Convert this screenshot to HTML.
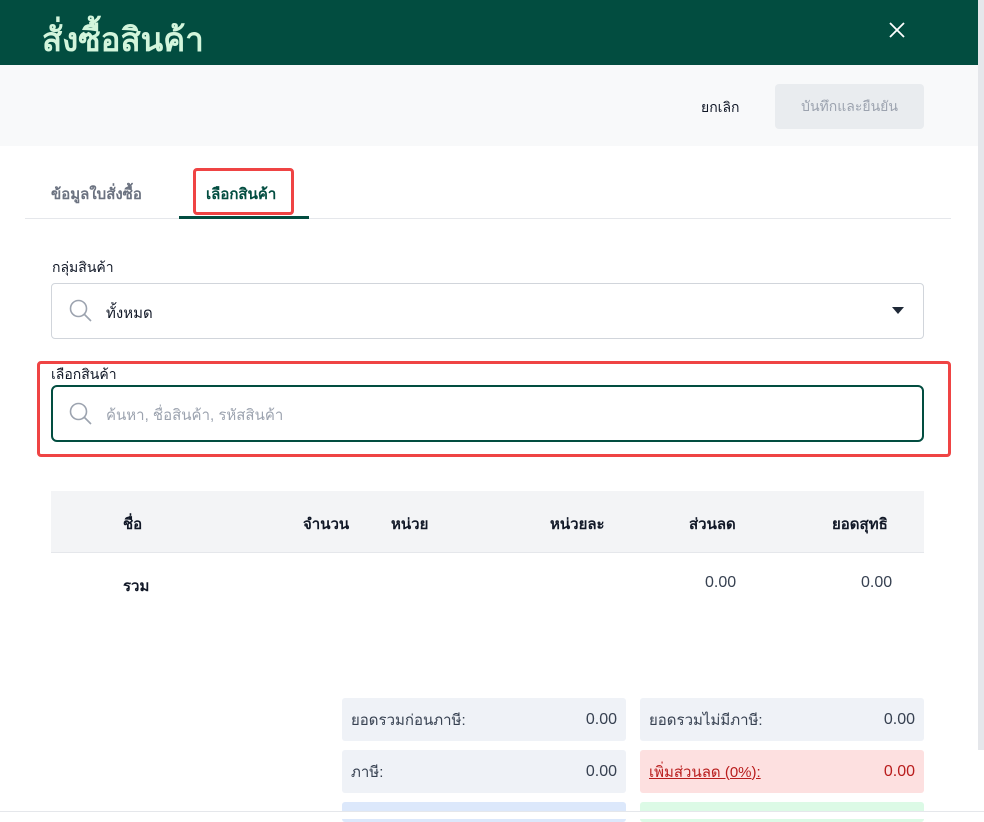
<!DOCTYPE html>
<html><head><meta charset="utf-8"><style>
*{box-sizing:border-box;margin:0;padding:0}
body{width:984px;height:819px;overflow:hidden;background:#fff;font-family:"Liberation Sans","DejaVu Sans",sans-serif;font-size:15px;color:#111827;position:relative}
.a{position:absolute}
.hdr{left:0;top:0;width:978px;height:65px;background:#024d40}
.title{left:42px;top:13px;font-size:33px;color:#d3f5dc;font-weight:bold}
.sb{left:978px;top:0;width:6px;height:750px;background:#e5e7eb}
.bar{left:0;top:65px;width:978px;height:81px;background:#f8f9fa}
.btn{left:775px;top:84px;width:149px;height:45px;background:#e9ecef;border-radius:4px;color:#9ca3af;font-size:14px;text-align:center;line-height:45px}
.box{border-radius:4px}
.row{display:flex;justify-content:space-between;align-items:center;padding:0 9px;height:43px;font-size:15px;border-radius:3px}
.n{font-size:16px}
</style></head><body>
<div class="a hdr"></div>
<div class="a title">สั่งซื้อสินค้า</div>
<svg class="a" style="left:888px;top:21px" width="18" height="18" viewBox="0 0 18 18"><path d="M2 2L16 16M16 2L2 16" stroke="#fff" stroke-width="1.8"/></svg>
<div class="a sb"></div>
<div class="a bar"></div>
<div class="a" style="left:701px;top:97px;font-size:14px">ยกเลิก</div>
<div class="a btn">บันทึกและยืนยัน</div>

<div class="a" style="left:25px;top:218px;width:926px;height:1px;background:#e5e7eb"></div>
<div class="a" style="left:51px;top:182px;color:#6b7280;font-weight:bold;font-size:15px">ข้อมูลใบสั่งซื้อ</div>
<div class="a" style="left:179px;top:216px;width:130px;height:3px;background:#024d40"></div>
<div class="a" style="left:193px;top:168px;width:101px;height:47px;border:3px solid #ef4444;border-radius:4px"></div>
<div class="a" style="left:206px;top:182px;color:#024d40;font-weight:bold;font-size:15px">เลือกสินค้า</div>

<div class="a" style="left:52px;top:257px;font-size:14px">กลุ่มสินค้า</div>
<div class="a box" style="left:51px;top:283px;width:873px;height:56px;border:1px solid #d1d5db"></div>
<svg class="a" style="left:68px;top:298px" width="26" height="26" viewBox="0 0 26 26"><circle cx="10.5" cy="10.5" r="8" fill="none" stroke="#9ca3af" stroke-width="1.6"/><path d="M16.5 16.5L23 23" stroke="#9ca3af" stroke-width="1.6"/></svg>
<div class="a" style="left:106px;top:301px;font-size:15px">ทั้งหมด</div>
<svg class="a" style="left:892px;top:307px" width="12" height="8"><path d="M0 0H12L6 7z" fill="#1f2937"/></svg>

<div class="a" style="left:37px;top:361px;width:914px;height:96px;border:3px solid #ef4444;border-radius:4px"></div>
<div class="a" style="left:51px;top:364px;font-size:14px">เลือกสินค้า</div>
<div class="a box" style="left:51px;top:385px;width:873px;height:57px;border:2px solid #024d40;border-radius:6px"></div>
<svg class="a" style="left:68px;top:401px" width="26" height="26" viewBox="0 0 26 26"><circle cx="10.5" cy="10.5" r="8" fill="none" stroke="#9ca3af" stroke-width="1.6"/><path d="M16.5 16.5L23 23" stroke="#9ca3af" stroke-width="1.6"/></svg>
<div class="a" style="left:106px;top:403px;font-size:15px;color:#9ca3af">ค้นหา, ชื่อสินค้า, รหัสสินค้า</div>

<div class="a" style="left:51px;top:491px;width:873px;height:62px;background:#f3f4f6;border-bottom:1px solid #e5e7eb"></div>
<div class="a" style="left:123px;top:512px;font-weight:bold">ชื่อ</div>
<div class="a" style="left:303px;top:512px;font-weight:bold">จำนวน</div>
<div class="a" style="left:391px;top:512px;font-weight:bold">หน่วย</div>
<div class="a" style="left:550px;top:512px;font-weight:bold">หน่วยละ</div>
<div class="a" style="left:689px;top:512px;font-weight:bold">ส่วนลด</div>
<div class="a" style="left:832px;top:512px;font-weight:bold">ยอดสุทธิ</div>
<div class="a" style="left:123px;top:574px;font-weight:bold">รวม</div>
<div class="a n" style="left:705px;top:574px;color:#374151">0.00</div>
<div class="a n" style="left:861px;top:574px;color:#374151">0.00</div>

<div class="a row" style="left:342px;top:698px;width:284px;background:#eff2f7;color:#374151"><span>ยอดรวมก่อนภาษี:</span><span class="n">0.00</span></div>
<div class="a row" style="left:640px;top:698px;width:284px;background:#eff2f7;color:#374151"><span>ยอดรวมไม่มีภาษี:</span><span class="n">0.00</span></div>
<div class="a row" style="left:342px;top:750px;width:284px;background:#eff2f7;color:#374151"><span>ภาษี:</span><span class="n">0.00</span></div>
<div class="a row" style="left:640px;top:750px;width:284px;background:#fde0e0;color:#b91c1c"><span style="text-decoration:underline">เพิ่มส่วนลด (0%):</span><span class="n">0.00</span></div>
<div class="a" style="left:342px;top:802px;width:284px;height:20px;background:#dce8fb;border-radius:3px"></div>
<div class="a" style="left:640px;top:802px;width:284px;height:20px;background:#dcfae6;border-radius:3px"></div>
<div class="a" style="left:0;top:811px;width:984px;height:8px;background:#fff;border-top:1px solid #e5e7eb"></div>
</body></html>
